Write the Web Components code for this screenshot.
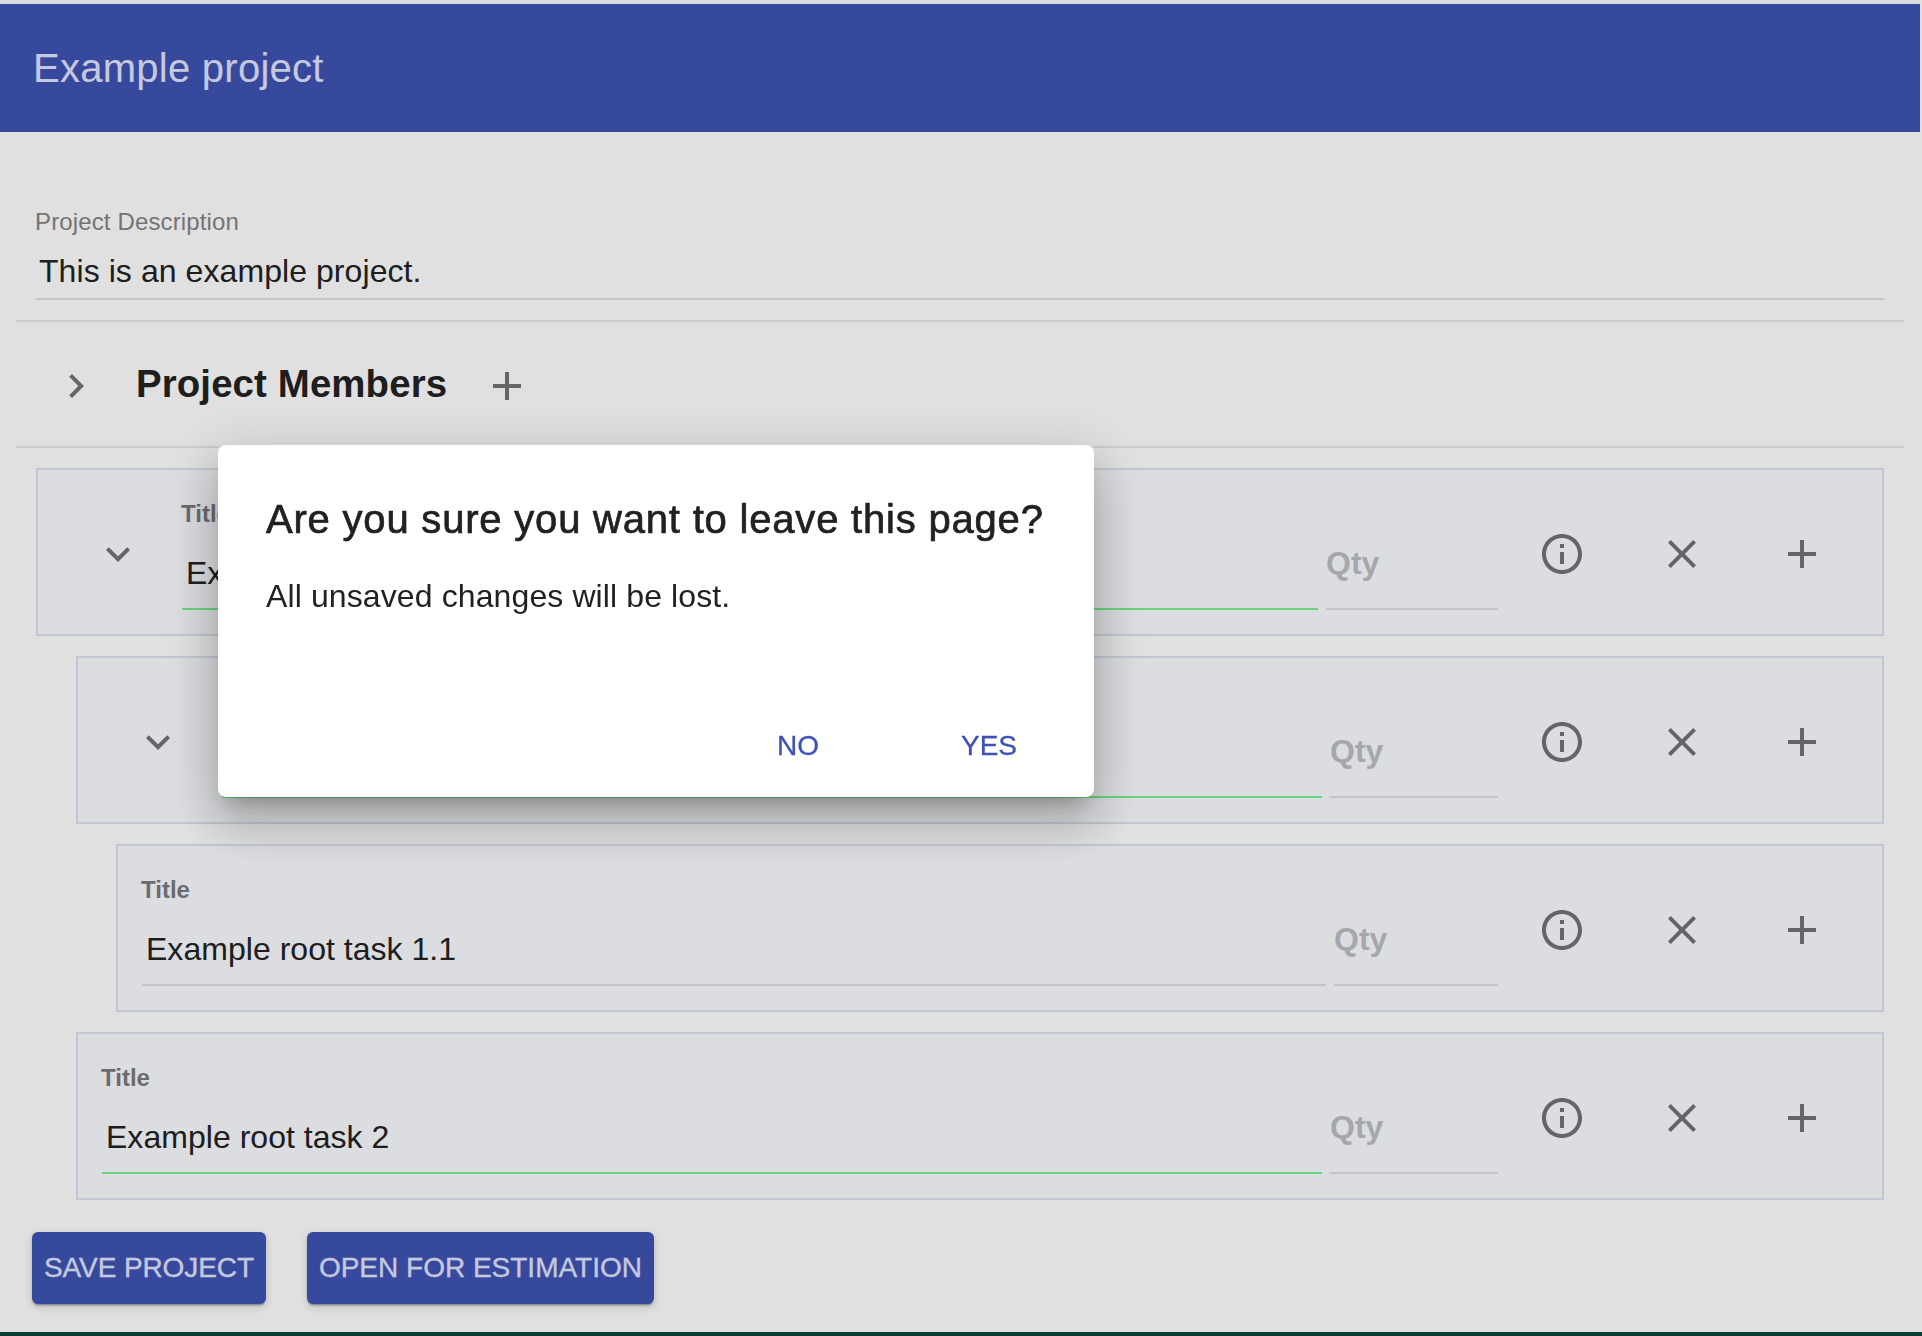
<!DOCTYPE html>
<html lang="en">
<head>
<meta charset="utf-8">
<title>Example project</title>
<style>
  html, body { margin: 0; padding: 0; background: #e0e0e0; }
  body { width: 1922px; height: 1336px; overflow: hidden; font-family: "Liberation Sans", Arial, sans-serif; color: #232323; }
</style>
</head>
<body>
<project-page>
  <app-header slot="header">Example project</app-header>
  <text-line slot="desc" label="Project Description" value="This is an example project."></text-line>
  <section-row slot="section">Project Members</section-row>
  <task-card slot="tasks" indent="0" expandable active value="Example root task 1"></task-card>
  <task-card slot="tasks" indent="1" expandable active value="Example root task 1.1"></task-card>
  <task-card slot="tasks" indent="2" value="Example root task 1.1"></task-card>
  <task-card slot="tasks" indent="1" active value="Example root task 2"></task-card>
  <action-button slot="actions">SAVE PROJECT</action-button>
  <action-button slot="actions" style="letter-spacing:0">OPEN FOR ESTIMATION</action-button>
</project-page>
<confirm-dialog heading="Are you sure you want to leave this page?" message="All unsaved changes will be lost."></confirm-dialog>
<script>
const ICONS = {
  info: 'M11 7h2v2h-2zm0 4h2v6h-2zm1-9C6.48 2 2 6.48 2 12s4.48 10 10 10 10-4.48 10-10S17.52 2 12 2zm0 18c-4.41 0-8-3.59-8-8s3.59-8 8-8 8 3.59 8 8-3.59 8-8 8z',
  close: 'M19 6.41L17.59 5 12 10.59 6.41 5 5 6.41 10.59 12 5 17.59 6.41 19 12 13.41 17.59 19 19 17.59 13.41 12z',
  add: 'M19 13h-6v6h-2v-6H5v-2h6V5h2v6h6v2z',
  down: 'M16.59 8.59L12 13.17 7.41 8.59 6 10l6 6 6-6z',
  right: 'M10 6L8.59 7.41 13.17 12l-4.58 4.59L10 18l6-6z'
};
class Base extends HTMLElement {
  constructor(){ super(); this.attachShadow({mode:'open'}); }
  connectedCallback(){ this.shadowRoot.innerHTML = this.render(); }
}
customElements.define('mat-icon', class extends Base {
  render(){ return `<style>:host{display:block;width:48px;height:48px;color:#727377}svg{display:block;width:48px;height:48px;fill:currentColor}</style>
    <svg viewBox="0 0 24 24" aria-hidden="true"><path d="${ICONS[this.getAttribute('name')]}"/></svg>`; }
});
customElements.define('project-page', class extends Base {
  render(){ return `<style>
    :host{display:flex;flex-direction:column;width:1920px;height:1336px;background:#fff;border-right:2px solid #fff;box-sizing:content-box}
    .strip{height:4px;background:#fafbff;flex:none}
    main{flex:1;display:flex;flex-direction:column;padding:0 16px}
    .desc{padding:76px 20px 20px;border-bottom:2px solid #e7e7e7}
    .tasks{display:flex;flex-direction:column;gap:20px;padding:20px 20px 0}
    .actions{display:flex;gap:41px;margin:32px 0 0 16px}
    .bottom{height:4px;background:#104340;flex:none;margin-right:-2px}
  </style>
  <div class="strip"></div>
  <slot name="header"></slot>
  <main>
    <div class="desc"><slot name="desc"></slot></div>
    <slot name="section"></slot>
    <div class="tasks"><slot name="tasks"></slot></div>
    <div class="actions"><slot name="actions"></slot></div>
  </main>
  <div class="bottom"></div>`; }
});
customElements.define('app-header', class extends Base {
  render(){ return `<style>
    :host{display:flex;align-items:center;height:128px;padding-left:33px;background:#3f54b3;color:#e1e5ff;font-size:40px;line-height:48px;letter-spacing:.26px;flex:none;box-sizing:border-box}
  </style><slot></slot>`; }
});
customElements.define('text-line', class extends Base {
  render(){ return `<style>
    :host{display:block}
    .l{font-size:24px;line-height:28px;color:#858585;letter-spacing:.14px;margin-left:-1px}
    .v{margin-top:13px;padding:0 0 5px 3px;font-size:32px;line-height:44px;letter-spacing:.07px;color:#232323;border-bottom:2px solid #e1e1e1}
  </style><div class="l">${this.getAttribute('label')}</div><div class="v">${this.getAttribute('value')}</div>`; }
});
customElements.define('section-row', class extends Base {
  render(){ return `<style>
    :host{display:flex;align-items:center;height:124px;border-bottom:2px solid #e7e7e7;box-sizing:content-box}
    mat-icon{position:relative;top:2px}
    mat-icon.c{margin-left:36px}
    .t{margin-left:36px;font-size:38.4px;font-weight:700;line-height:48px;letter-spacing:.12px;color:#232323}
    mat-icon.a{margin-left:36px}
  </style><mat-icon class="c" name="right"></mat-icon><span class="t"><slot></slot></span><mat-icon class="a" name="add"></mat-icon>`; }
});
customElements.define('task-card', class extends Base {
  render(){
    const ind = +this.getAttribute('indent') * 40;
    const exp = this.hasAttribute('expandable');
    const active = this.hasAttribute('active');
    const act = n => `<div class="cell"><mat-icon name="${n}"></mat-icon></div>`;
    return `<style>
    :host{display:block;margin-left:${ind}px;background:#fafcff;border:2px solid #dae3ef;box-sizing:border-box}
    .row{container-type:inline-size;display:flex;padding:4px 20px 0;align-items:center;height:160px;box-sizing:content-box}
    .cell{flex:0 0 120px;display:flex;justify-content:center;align-items:center;height:160px}
    .f{align-self:flex-start;margin:28px 4px 0;box-sizing:border-box;height:108px;position:relative;border-bottom:2px solid #e0e1e4}
    .title{flex:1;min-width:0}
    .title.on{border-bottom-color:#78f38d}
    .qty{flex:0 0 calc(10cqw - 8.4px);margin-left:4px}
    .lab{font-size:24px;line-height:24px;font-weight:700;color:#797a7e;margin-left:-1px}
    .val{font-size:32px;line-height:44px;letter-spacing:.03px;color:#232323;margin:25px 0 0 4px}
    .ph{font-size:32px;line-height:44px;font-weight:700;color:#bebfc4;margin-top:39px}
  </style>
  <div class="row">
    ${exp ? act('down') : ''}
    <div class="f title${active ? ' on' : ''}"><div class="lab">Title</div><div class="val">${this.getAttribute('value')}</div></div>
    <div class="f qty"><div class="ph">Qty</div></div>
    ${act('info')}${act('close')}${act('add')}
  </div>`; }
});
customElements.define('action-button', class extends Base {
  render(){ return `<style>
    :host{display:inline-flex;align-items:center;height:72px;padding:0 12px;background:#3f54b3;color:#e1e5ff;font-size:28px;line-height:32px;letter-spacing:-.1px;border-radius:6px;box-shadow:0 3px 1px -2px rgba(0,0,0,.2),0 2px 2px 0 rgba(0,0,0,.14),0 3px 8px 0 rgba(0,0,0,.16);box-sizing:border-box;-webkit-text-stroke:.3px currentColor}
  </style><slot></slot>`; }
});
customElements.define('confirm-dialog', class extends Base {
  render(){ return `<style>
    :host{position:fixed;inset:0;background:rgba(0,0,0,.12);display:block}
    .d{position:absolute;left:218px;top:445px;width:876px;height:352px;background:#fff;border-radius:8px;box-sizing:border-box;display:flex;flex-direction:column;padding:0 0 0 48px;
       box-shadow:0 14px 18px -9px rgba(0,0,0,.22),0 29px 46px 4px rgba(0,0,0,.15),0 11px 56px 10px rgba(0,0,0,.12)}
    h2{margin:50px 0 0;font-size:40px;line-height:48px;font-weight:400;letter-spacing:.8px;color:#212121;-webkit-text-stroke:.7px #212121}
    p{margin:33px 0 0;font-size:32px;line-height:40px;letter-spacing:.11px;color:#212121}
    .a{margin-top:auto;display:flex;justify-content:flex-end;gap:110px;padding:0 61px 35px 0}
    .b{padding:0 16px;font-size:28px;line-height:32px;color:#3f51b5;-webkit-text-stroke:.3px #3f51b5}
  </style>
  <div class="d" role="dialog"><h2>${this.getAttribute('heading')}</h2><p>${this.getAttribute('message')}</p>
  <div class="a"><div class="b">NO</div><div class="b">YES</div></div></div>`; }
});
</script>
</body>
</html>
